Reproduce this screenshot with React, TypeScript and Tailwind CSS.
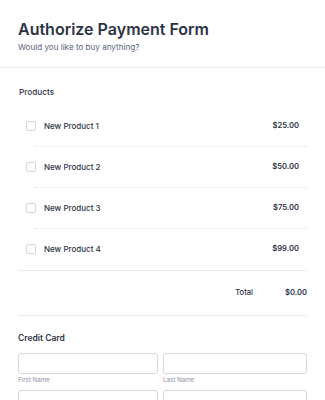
import React from 'react'

const products = [
  { name: 'New Product 1', price: '$25.00' },
  { name: 'New Product 2', price: '$50.00' },
  { name: 'New Product 3', price: '$75.00' },
  { name: 'New Product 4', price: '$99.00' },
]

export default function App() {
  return (
    <div className="w-[325px] h-[400px] overflow-hidden bg-white text-[#2c3345]" style={{ fontFamily: 'Inter, "Noto Sans", sans-serif' }}>
      <header className="pl-[18px] pt-[19px] pb-[14px] border-b border-[#eceef2] shadow-[0_1px_2px_rgba(0,0,0,0.03)]">
        <h1 className="text-[16px] leading-[20px] font-semibold">Authorize Payment Form</h1>
        <p className="mt-[3px] text-[8.1px] leading-[11px] text-[#57647e]">Would you like to buy anything?</p>
      </header>

      <section className="px-[18px] pt-[18px]">
        <h2 className="pl-[1px] text-[8.2px] leading-[12px] font-medium">Products</h2>
        <ul className="mt-[8px] pl-[8px]">
          {products.map((p, i) => (
            <li key={p.name}>
              <div className="flex items-center h-[40px]">
                <span className="w-[10px] h-[10px] border border-[#d3d7e0] rounded-[2px] shrink-0" />
                <span className="ml-[8px] text-[8px] font-medium">{p.name}</span>
                <span className="ml-auto mr-[8px] text-[7.6px] font-semibold">{p.price}</span>
              </div>
              {i < products.length - 1 && <div className="ml-[9px] border-t border-dotted border-[#e2e3e6]" />}
            </li>
          ))}
        </ul>
        <div className="border-t border-[#e8eaee] mt-[1px] h-[45px] flex items-center justify-end">
          <span className="text-[7.6px] font-medium">Total</span>
          <span className="ml-[32px] text-[7.6px] font-semibold">$0.00</span>
        </div>
        <div className="border-t border-[#e8eaee] pt-[16px]">
          <h2 className="text-[8.5px] leading-[12px] font-semibold">Credit Card</h2>
          <div className="mt-[9px] grid grid-cols-[140px_1fr] gap-x-[5px]">
            <div>
              <div className="h-[21px] border border-[#d3d7e0] rounded-[3px]" />
              <div className="mt-[1px] text-[6.2px] leading-[9px] text-[#8c94a6]">First Name</div>
            </div>
            <div>
              <div className="h-[21px] border border-[#d3d7e0] rounded-[3px]" />
              <div className="mt-[1px] text-[6.2px] leading-[9px] text-[#8c94a6]">Last Name</div>
            </div>
            <div className="mt-[6px] h-[21px] border border-[#d3d7e0] rounded-[3px]" />
            <div className="mt-[6px] h-[21px] border border-[#d3d7e0] rounded-[3px]" />
          </div>
        </div>
      </section>
    </div>
  )
}
